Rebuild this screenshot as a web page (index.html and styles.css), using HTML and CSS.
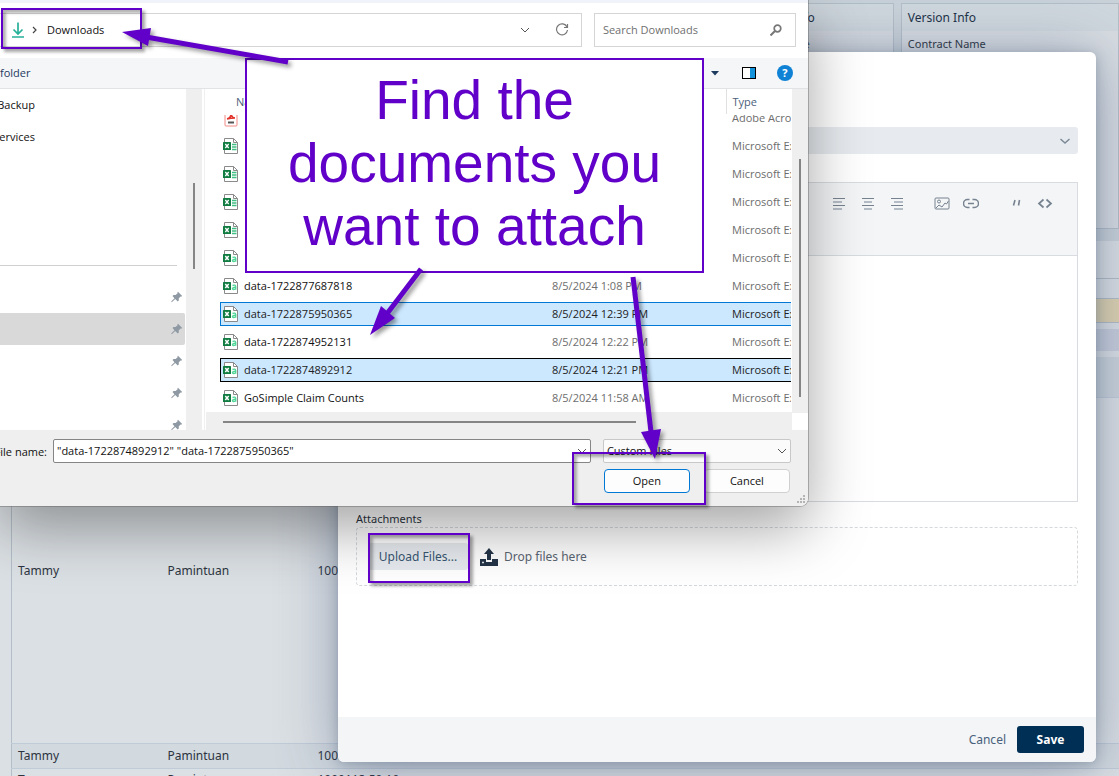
FILE: index.html
```html
<!DOCTYPE html>
<html lang="en">
<head>
    <meta charset="UTF-8">
    <meta name="viewport" content="width=device-width, initial-scale=1.0">
    <title>Attach documents</title>
    <link rel="stylesheet" href="styles.css">
</head>
<body>
    <svg class="sprite" aria-hidden="true">
        <symbol id="excel" viewBox="0 0 16 16">
            <path d="M1.500 .5h9l4 4v11h-13z" fill="#fff" stroke="#8a8a8a"/>
            <path d="M10.500 .5v4h4" fill="none" stroke="#8a8a8a"/>
            <path d="M9 6.500h4.500M9 9h4.500M9 11.500h4.500" stroke="#3fbf83" stroke-width="1.400"/>
            <rect x="0" y="4" width="8" height="8" rx=".5" fill="#107c41"/>
            <path d="M2.300 6l3.400 4M5.700 6l-3.400 4" stroke="#fff" stroke-width="1.300"/>
        </symbol>
        <symbol id="csv" viewBox="0 0 16 16">
            <path d="M1.500 .5h9l4 4v11h-13z" fill="#fff" stroke="#8a8a8a"/>
            <path d="M10.500 .5v4h4" fill="none" stroke="#8a8a8a"/>
            <path d="M9.500 7.500q3-1.200 3.200 1v3.200M12.700 9.300q-3.200-.2-3.200 1.300 .2 1.700 3.200 .2" fill="none" stroke="#4fd596" stroke-width="1.400"/>
            <rect x="0" y="4" width="8" height="8" rx=".5" fill="#107c41"/>
            <path d="M2.300 6l3.400 4M5.700 6l-3.400 4" stroke="#fff" stroke-width="1.500"/>
        </symbol>
        <symbol id="pin" viewBox="0 0 12 12">
            <path d="M7 .8l4.200 4.200-1.200 .7-.5-.1-1.800 1.900 .1 2-1 1-2.600-2.600-3.400 3.300-.6-.6 3.300-3.400-2-2.200 1-1 2.100 .1 2-1.900-.2-.6z" fill="#8f99a3"/>
        </symbol>
        <symbol id="chevron" viewBox="0 0 12 12">
            <path d="M2 4l4 4 4-4" fill="none" stroke="currentColor"/>
        </symbol>
    </svg>

    <!-- Page behind the windows -->
    <main class="app">
        <div class="info-grid">
            <section class="info"></section>
            <section class="info"></section>
            <section class="info"></section>
            <section class="info contact">
                <h2>Contract Holder Info</h2>
                <p>Contract Holder Name</p>
            </section>
            <section class="info">
                <h2>Version Info</h2>
                <p>Contract Name</p>
            </section>
        </div>
        <div class="panel">
            <div class="panel-title"></div>
            <div class="panel-line"></div>
            <div class="panel-alert"></div>
            <div class="panel-bar"></div>
            <table class="claims">
                <thead>
                    <tr><th></th><th></th><th></th></tr>
                </thead>
                <tbody>
                    <tr class="tall"><td>Tammy</td><td>Pamintuan</td><td>1000113 50 10</td></tr>
                    <tr class="alt"><td>Tammy</td><td>Pamintuan</td><td>1000113 50 10</td></tr>
                    <tr class="next"><td>Tammy</td><td>Pamintuan</td><td>1000113 50 10</td></tr>
                </tbody>
            </table>
        </div>
    </main>

    <!-- Note form -->
    <form class="modal">
        <div class="modal-body">
            <div class="picker">
                <select class="picker-select" aria-label="Type"><option></option></select>
                <svg class="picker-arrow" viewBox="0 0 12 12"><path d="M1.500 4l4.500 4 4.500-4" fill="none" stroke="#7b8896" stroke-width="1.500"/></svg>
            </div>
            <div class="editor">
                <div class="editor-bar">
                    <button type="button" aria-label="Align left"><svg viewBox="0 0 16 16"><path d="M2 3.500h12M2 10.500h12"/><path class="pale" d="M2 7h9M2 14h9"/></svg></button>
                    <button type="button" aria-label="Align center"><svg viewBox="0 0 16 16"><path d="M2 3.500h12M2 10.500h12"/><path class="pale" d="M4 7h8M4 14h8"/></svg></button>
                    <button type="button" aria-label="Align right"><svg viewBox="0 0 16 16"><path d="M2 3.500h12M2 10.500h12"/><path class="pale" d="M5 7h9M5 14h9"/></svg></button>
                    <button type="button" class="gap" aria-label="Image"><svg viewBox="0 0 16 16"><rect x="1" y="3" width="14" height="11" rx="1"/><circle cx="5" cy="6.500" r="1.500"/><path d="M2 13l3-3 3 2 3-4 1.500 1 2-3"/></svg></button>
                    <button type="button" aria-label="Link"><svg viewBox="0 0 16 16"><path d="M6.500 4.500h-2a4 4 0 0 0 0 8h2M9.500 4.500h2a4 4 0 0 1 0 8h-2M5 8.500h6" stroke-width="1.500"/></svg></button>
                    <button type="button" class="gap" aria-label="Quote"><svg viewBox="0 0 16 16"><path d="M7 5l-1.500 5.500M11.500 5l-1 5.500" stroke-width="1.600"/></svg></button>
                    <button type="button" aria-label="Code"><svg viewBox="0 0 16 16"><path d="M6.500 4.500l-4.500 4 4.500 4M9.500 4.500l4.500 4-4.500 4" stroke-width="1.700"/></svg></button>
                </div>
                <textarea class="editor-text" aria-label="Note"></textarea>
            </div>
            <div class="field-label">Attachments</div>
            <div class="dropzone">
                <button type="button" class="upload">Upload Files...</button>
                <svg class="upload-icon" viewBox="0 0 18 18"><path d="M9 0l5 6h-3v6h-4v-6h-3zM0 11h6v3h6v-3h6v7h-18z" fill="#243447"/><path d="M2 14.500h2" stroke="#dfe3e7" stroke-width="1.500"/></svg>
                <span>Drop files here</span>
            </div>
        </div>
        <div class="modal-footer">
            <button type="button" class="cancel-link">Cancel</button>
            <button type="button" class="save">Save</button>
        </div>
    </form>

    <!-- File dialog -->
    <section class="dialog">
        <div class="address-row">
            <div class="address">
                <svg class="dl-icon" viewBox="0 0 14 16"><path d="M7 .5v11M2.500 7.500l4.500 4.500 4.500-4.500M1 15h12" fill="none" stroke="#27b09a" stroke-width="1.700"/></svg>
                <svg class="crumb-arrow" viewBox="0 0 8 8"><path d="M2 1l3 3-3 3" fill="none" stroke="#444" stroke-width="1.200"/></svg>
                <span class="crumb">Downloads</span>
                <svg class="ic12"><use href="#chevron"/></svg>
                <svg class="refresh" viewBox="0 0 14 14"><path d="M12 4a5.500 5.500 0 1 0 .5 3M12.500 1v3.500h-3.500" fill="none" stroke="#777" stroke-width="1.200"/></svg>
            </div>
            <div class="search">
                <input type="text" placeholder="Search Downloads" aria-label="Search Downloads">
                <svg class="ic12" viewBox="0 0 12 12"><circle cx="7.500" cy="4.500" r="3.300" fill="none" stroke="#777" stroke-width="1.700"/><path d="M5 7l-4.500 4.500" stroke="#777" stroke-width="2"/></svg>
            </div>
        </div>
        <div class="commands">
            <span class="commands-text">folder</span>
            <svg class="view-caret" viewBox="0 0 8 5"><path d="M0 0h8l-4 4.500z" fill="#1d3a5f"/></svg>
            <svg class="pane-icon" viewBox="0 0 14 12"><rect x=".5" y=".5" width="13" height="11" fill="#fff" stroke="#000"/><path d="M8 1h5v10h-5z" fill="#1293dc"/></svg>
            <button type="button" class="help">?</button>
        </div>
        <div class="browser">
            <nav class="side">
                <div class="side-item"><span class="side-text">Backup</span></div>
                <div class="side-item"><span class="side-text">Services</span></div>
                <hr class="side-line">
                <div class="side-item"><svg class="pin"><use href="#pin"/></svg></div>
                <div class="side-item current"><svg class="pin"><use href="#pin"/></svg></div>
                <div class="side-item"><svg class="pin"><use href="#pin"/></svg></div>
                <div class="side-item"><svg class="pin"><use href="#pin"/></svg></div>
                <div class="side-item"><svg class="pin"><use href="#pin"/></svg></div>
            </nav>
            <div class="side-scroll"><div class="thumb"></div></div>
            <div class="list">
                <table class="files">
                    <colgroup><col class="col-name"><col class="col-date"><col></colgroup>
                    <thead>
                        <tr><th class="name-head">Name</th><th></th><th class="type-head">Type</th></tr>
                    </thead>
                    <tbody>
                        <tr class="cut">
                            <td><div class="cell"><svg class="file" viewBox="0 0 16 16"><rect x="2" y="1" width="12" height="14" rx="1" fill="#fff" stroke="#f08a85"/><path d="M4 8q4-1 4-5 1 4 4 4-4 0-8 1" fill="none" stroke="#e2322b" stroke-width="1.500"/><path d="M5 11.500h6" stroke="#555" stroke-width="2"/></svg></div></td>
                            <td><div class="cell"></div></td>
                            <td><div class="cell">Adobe Acrobat</div></td>
                        </tr>
                        <tr><td><div class="cell"><svg class="file"><use href="#excel"/></svg></div></td><td><div class="cell"></div></td><td><div class="cell">Microsoft Excel</div></td></tr>
                        <tr><td><div class="cell"><svg class="file"><use href="#excel"/></svg></div></td><td><div class="cell"></div></td><td><div class="cell">Microsoft Excel</div></td></tr>
                        <tr><td><div class="cell"><svg class="file"><use href="#excel"/></svg></div></td><td><div class="cell"></div></td><td><div class="cell">Microsoft Excel</div></td></tr>
                        <tr><td><div class="cell"><svg class="file"><use href="#excel"/></svg></div></td><td><div class="cell"></div></td><td><div class="cell">Microsoft Excel</div></td></tr>
                        <tr><td><div class="cell"><svg class="file"><use href="#csv"/></svg></div></td><td><div class="cell"></div></td><td><div class="cell">Microsoft Excel</div></td></tr>
                        <tr><td><div class="cell"><svg class="file"><use href="#csv"/></svg>data-1722877687818</div></td><td><div class="cell">8/5/2024 1:08 PM</div></td><td><div class="cell">Microsoft Excel</div></td></tr>
                        <tr class="selected"><td><div class="cell"><svg class="file"><use href="#csv"/></svg>data-1722875950365</div></td><td><div class="cell">8/5/2024 12:39 PM</div></td><td><div class="cell">Microsoft Excel</div></td></tr>
                        <tr><td><div class="cell"><svg class="file"><use href="#csv"/></svg>data-1722874952131</div></td><td><div class="cell">8/5/2024 12:22 PM</div></td><td><div class="cell">Microsoft Excel</div></td></tr>
                        <tr class="selected focused"><td><div class="cell"><svg class="file"><use href="#csv"/></svg>data-1722874892912</div></td><td><div class="cell">8/5/2024 12:21 PM</div></td><td><div class="cell">Microsoft Excel</div></td></tr>
                        <tr><td><div class="cell"><svg class="file"><use href="#csv"/></svg>GoSimple Claim Counts</div></td><td><div class="cell">8/5/2024 11:58 AM</div></td><td><div class="cell">Microsoft Excel</div></td></tr>
                    </tbody>
                </table>
                <div class="list-scroll"><div class="thumb"></div></div>
            </div>
            <div class="files-scroll"><div class="thumb"></div></div>
        </div>
        <div class="dialog-footer">
            <div class="name-row">
                <label class="name-label" for="file-name"><span>File name:</span></label>
                <div class="combo name-combo">
                    <input type="text" id="file-name" value='"data-1722874892912" "data-1722875950365"'>
                    <svg class="ic12"><use href="#chevron"/></svg>
                </div>
                <div class="combo type-combo">
                    <select aria-label="File type"><option>Custom Files</option></select>
                    <svg class="ic12"><use href="#chevron"/></svg>
                </div>
            </div>
            <div class="button-row">
                <button type="button" class="btn open">Open</button>
                <button type="button" class="btn">Cancel</button>
            </div>
            <svg class="grip" viewBox="0 0 10 10"><path d="M7 1h2M7 4h2M7 7h2M4 4h2M4 7h2M1 7h2" stroke="#b4b4b4" stroke-width="2"/></svg>
        </div>
    </section>

    <!-- Notes drawn on top -->
    <div class="mark mark-folder"></div>
    <div class="mark mark-open"></div>
    <div class="mark mark-upload"></div>
    <div class="callout">Find the documents you want to attach</div>
    <svg class="arrows" viewBox="0 0 1119 776" aria-hidden="true">
        <g stroke="#6000c8" stroke-width="5" fill="#6000c8">
            <path d="M288 62L146 37"/>
            <path d="M122 32L151 28L148 46z" stroke="none"/>
            <path d="M421 269L386 315"/>
            <path d="M370 335L381 306L395 318z" stroke="none"/>
            <path d="M633 277L651 432"/>
            <path d="M655 459L641 432L661 429z" stroke="none"/>
        </g>
    </svg>
</body>
</html>
```
FILE: styles.css
```css
:root {
    --purple: #6000c8;
    --navy: #002f56;
    --line: #b3bec8;
    --page: #dbe0e4;
    --dialog-gray: #efefef;
}

* {
    box-sizing: border-box;
}

body {
    font-family: 'Noto Sans', 'Open Sans', sans-serif;
    font-size: 12px;
    margin: 0;
    height: 100vh;
    overflow: hidden;
    position: relative;
    background: var(--page);
    color: #2c3440;
}

button,
input,
select,
textarea {
    font: inherit;
    color: inherit;
    margin: 0;
    padding: 0;
    border: none;
    background: none;
    outline: none;
    appearance: none;
}

svg {
    display: block;
    flex: none;
}

.sprite {
    position: absolute;
    width: 0;
    height: 0;
}

.ic12 {
    width: 12px;
    height: 12px;
    color: #555;
}

/* Page behind the windows */
.app {
    height: 100%;
    overflow: hidden;
    padding-top: 3px;
    background: #c9d2d9;
}

.info-grid {
    display: grid;
    grid-template-columns: repeat(5, 1fr);
    gap: 7px;
    height: 226px;
}

.info {
    border: 1px solid var(--line);
    background: #d8dde2;
}

.info h2 {
    margin: 0;
    padding: 0 6px;
    font-size: 12px;
    line-height: 27px;
    font-weight: normal;
    background: #d0d8de;
    color: #1d3147;
}

.info p {
    margin: 0;
    padding: 5px 6px;
    font-size: 11px;
    line-height: 16px;
    white-space: nowrap;
}

.contact {
    text-align: right;
}

.contact h2 {
    padding-right: 78px;
}

.contact p {
    padding-right: 83px;
}

.panel {
    margin-top: 12px;
    padding-left: 11px;
    background: var(--page);
}

.panel-title {
    height: 38px;
    border-bottom: 1px solid var(--line);
}

.panel-line {
    height: 20px;
    border-bottom: 1px solid var(--line);
}

.panel-alert {
    height: 24px;
    background: #dfd3b0;
    border-bottom: 1px solid var(--line);
}

.panel-bar {
    height: 22px;
    margin: 6px 0;
    background: #c7cedb;
}

.claims {
    width: 100%;
    border-collapse: collapse;
    table-layout: fixed;
    border-left: 1px solid var(--line);
}

.claims th,
.claims td {
    width: 150px;
    padding: 0 6px;
    height: 25px;
    border-bottom: 1px solid #c0cbd8;
    text-align: left;
}

.claims th:last-child,
.claims td:last-child {
    width: auto;
}

.claims th {
    height: 40px;
    background: #cbd4db;
}

.claims .tall td {
    height: 346px;
}

.claims .alt {
    background: #d2d9df;
}

.claims .next td {
    height: 23px;
}

/* Note form */
.modal {
    position: absolute;
    top: 52px;
    right: 23px;
    bottom: 14px;
    left: 338px;
    display: flex;
    flex-direction: column;
    background: #fff;
    border-radius: 6px;
    box-shadow: 0 4px 60px rgba(60, 75, 115, 0.45), 0 2px 12px rgba(50, 80, 100, 0.3);
}

.modal-body {
    flex: 1;
    padding: 75px 18px 0;
}

.picker {
    display: flex;
    align-items: center;
    padding-right: 7px;
    background: #e7ebef;
    border-radius: 3px;
}

.picker-select {
    flex: 1;
    height: 27px;
}

.picker-arrow {
    width: 12px;
    height: 12px;
}

.editor {
    margin-top: 28px;
    border: 1px solid #d8dce0;
}

.editor-bar {
    display: flex;
    justify-content: flex-end;
    gap: 13px;
    height: 73px;
    padding: 12px 24px 0 0;
    background: #f3f5f7;
    border-bottom: 1px solid #d8dce0;
}

.editor-bar button {
    width: 16px;
    height: 16px;
}

.editor-bar svg {
    width: 16px;
    height: 16px;
    fill: none;
    stroke: #76828f;
}

.editor-bar .pale {
    stroke: #b4bcc6;
    stroke-width: 2px;
}

.editor-bar .gap {
    margin-left: 16px;
}

.editor-text {
    display: block;
    width: 100%;
    height: 245px;
    resize: none;
}

.field-label {
    margin-top: 9px;
    padding-bottom: 1px;
    font-size: 11px;
    line-height: 15px;
}

.dropzone {
    display: flex;
    align-items: center;
    height: 59px;
    padding-left: 11px;
    border: 1px dashed #d5d9dc;
    border-radius: 4px;
    color: #5b6573;
}

.upload {
    width: 100px;
    height: 27px;
    background: #e7ebef;
    border-radius: 3px;
    color: #385672;
}

.upload-icon {
    width: 18px;
    height: 18px;
    margin: 0 6px 0 12px;
}

.modal-footer {
    display: flex;
    align-items: center;
    justify-content: flex-end;
    gap: 11px;
    height: 45px;
    padding-right: 12px;
    background: #f3f5f7;
    border-radius: 0 0 6px 6px;
}

.cancel-link {
    color: #48617c;
}

.save {
    width: 67px;
    height: 27px;
    background: var(--navy);
    border-radius: 3px;
    color: #fff;
    font-weight: bold;
}

/* File dialog */
.dialog {
    position: absolute;
    top: 0;
    left: 0;
    width: 72.2%;
    font-family: 'Open Sans', 'Noto Sans', sans-serif;
    font-size: 11px;
    color: #111;
    background: #fff;
    border-top: 3px solid #f0f3f9;
    border-radius: 0 0 8px 0;
    box-shadow: 0 0 0 1px rgba(90, 90, 90, 0.4), 0 22px 60px rgba(0, 0, 0, 0.36);
}

.address-row {
    display: flex;
    gap: 12px;
    padding: 10px 12px 11px 0;
}

.address,
.search {
    display: flex;
    align-items: center;
    height: 34px;
    border: 1px solid #d5d5d5;
}

.address {
    flex: 1;
    border-left: none;
    padding: 0 12px 0 11px;
}

.crumb,
.search input,
.commands-text,
.side-text,
.combo input,
.combo select {
    padding-bottom: 2px;
}

.dl-icon {
    width: 14px;
    height: 16px;
}

.crumb-arrow {
    width: 8px;
    height: 8px;
    margin: 0 8px 0 6px;
}

.crumb {
    flex: 1;
}

.refresh {
    width: 14px;
    height: 14px;
    margin-left: 24px;
}

.search {
    width: 202px;
    padding: 0 13px 0 8px;
}

.search input {
    flex: 1;
    min-width: 0;
}

.search input::placeholder {
    color: #707070;
}

.commands {
    display: flex;
    align-items: center;
    height: 31px;
    padding-right: 15px;
    background: #f4f6f8;
    border-bottom: 1px solid #e1e4e7;
}

.commands-text {
    flex: 1;
    color: #1d3a5f;
}

.view-caret {
    width: 8px;
    height: 5px;
}

.pane-icon {
    width: 14px;
    height: 12px;
    margin: 0 21px 0 23px;
}

.help {
    width: 16px;
    height: 16px;
    border-radius: 50%;
    background: #0f82d6;
    color: #fff;
    font-weight: bold;
    line-height: 16px;
}

.browser {
    display: flex;
    height: 341px;
    overflow: hidden;
}

.side {
    width: 186px;
    overflow: hidden;
}

.side-item {
    display: flex;
    align-items: center;
    height: 32px;
    margin-right: 1px;
}

.side-item.current {
    background: #d9d9d9;
    border-radius: 0 2px 2px 0;
}

/* the window's left part is off the screen */
.side-text,
.name-label {
    display: flex;
    justify-content: flex-end;
    width: 35px;
    white-space: nowrap;
}

.side-line {
    margin: 112px 9px 15px 0;
    border: none;
    border-top: 1px solid #d0d0d0;
}

.pin {
    width: 12px;
    height: 12px;
    margin: 0 2px 0 auto;
}

.side-scroll,
.files-scroll {
    width: 16px;
    background: var(--dialog-gray);
}

.thumb {
    background: #858585;
}

.side-scroll .thumb {
    width: 2px;
    height: 86px;
    margin: 94px auto 0 7px;
}

.files-scroll {
    height: 324px;
}

.files-scroll .thumb {
    width: 2px;
    height: 238px;
    margin: 70px 0 0 7px;
}

.list {
    flex: 1;
    min-width: 0;
    margin-left: 2px;
    border-left: 1px solid #f0f0f0;
    overflow: hidden;
}

.files {
    width: calc(100% - 16px);
    margin: 0 0 0 15px;
    border-collapse: collapse;
    table-layout: fixed;
}

.col-name {
    width: 332px;
}

.col-date {
    width: 174px;
}

.files th {
    height: 25px;
    padding: 0;
    font-weight: normal;
    text-align: left;
    color: #4c607a;
}

.files .name-head {
    padding-left: 16px;
}

.files .type-head {
    padding-left: 6px;
    border-left: 1px solid #e0e0e0;
}

.files td {
    padding: 2px 0;
    color: #6d6d6d;
}

.files td:first-child {
    color: #111;
}

.cell {
    display: flex;
    align-items: center;
    height: 24px;
    line-height: 22px;
    border: 1px solid transparent;
    border-width: 1px 0;
    white-space: nowrap;
    overflow: hidden;
}

.files td:first-child .cell {
    border-left-width: 1px;
    padding-left: 2px;
}

.files td:last-child .cell {
    padding-left: 6px;
}

.files .cut td {
    padding-top: 0;
}

.cut .cell {
    height: 16px;
    align-items: flex-end;
}

.cut .file {
    margin-bottom: 2px;
}

.selected .cell {
    background: #cce8ff;
    border-color: #0078d4;
    color: #222;
}

.focused .cell {
    border-color: #000;
}

.file {
    width: 16px;
    height: 16px;
    margin-right: 5px;
}

.list-scroll {
    height: 18px;
    margin-left: 1px;
    padding: 9px 0 0 17px;
    background: var(--dialog-gray);
}

.list-scroll .thumb {
    width: 413px;
    height: 2px;
}

.dialog-footer {
    position: relative;
    padding: 9px 18px 13px 0;
    background: var(--dialog-gray);
    border-radius: 0 0 8px 0;
}

.name-row {
    display: flex;
    margin-right: -1px;
}

.name-label {
    align-items: center;
    width: 47px;
    margin-right: 6px;
}

.combo {
    display: flex;
    align-items: center;
    height: 24px;
    padding: 0 2px 0 3px;
    background: #fff;
    border: 1px solid #858585;
    border-radius: 2px;
}

.combo input,
.combo select {
    flex: 1;
    min-width: 0;
}

.name-combo {
    flex: 1;
}

.type-combo {
    width: 188px;
    margin-left: 12px;
    background: #fbfbfb;
    border-color: #c8c8c8;
}

.button-row {
    display: flex;
    justify-content: flex-end;
    gap: 14px;
    margin-top: 6px;
}

.btn {
    width: 86px;
    height: 24px;
    padding-bottom: 2px;
    background: #fdfdfd;
    border: 1px solid #d0d0d0;
    border-radius: 4px;
}

.btn.open {
    border-color: #0078d4;
}

.grip {
    position: absolute;
    right: 2px;
    bottom: 1px;
    width: 10px;
    height: 10px;
}

/* Notes drawn on top */
.mark {
    position: absolute;
    border: 2px solid var(--purple);
    box-shadow: 3px 3px 3px rgba(0, 0, 0, 0.35), inset 3px 3px 3px rgba(0, 0, 0, 0.3);
}

.mark-folder {
    top: 8px;
    left: 1px;
    width: 141px;
    height: 41px;
}

.mark-open {
    top: 452px;
    left: 572px;
    width: 134px;
    height: 53px;
}

.mark-upload {
    top: 533px;
    left: 368px;
    width: 102px;
    height: 50px;
}

.callout {
    position: absolute;
    top: 58px;
    left: 245px;
    width: 459px;
    padding: 9px 24px 13px;
    border: 2px solid var(--purple);
    background: #fff;
    color: var(--purple);
    font-family: 'Liberation Sans', Arial, sans-serif;
    font-size: 55px;
    line-height: 63px;
    text-align: center;
}

.arrows {
    position: absolute;
    top: 0;
    left: 0;
    width: 1119px;
    height: 776px;
    filter: drop-shadow(3px 3px 2px rgba(0, 0, 0, 0.4));
}
```
